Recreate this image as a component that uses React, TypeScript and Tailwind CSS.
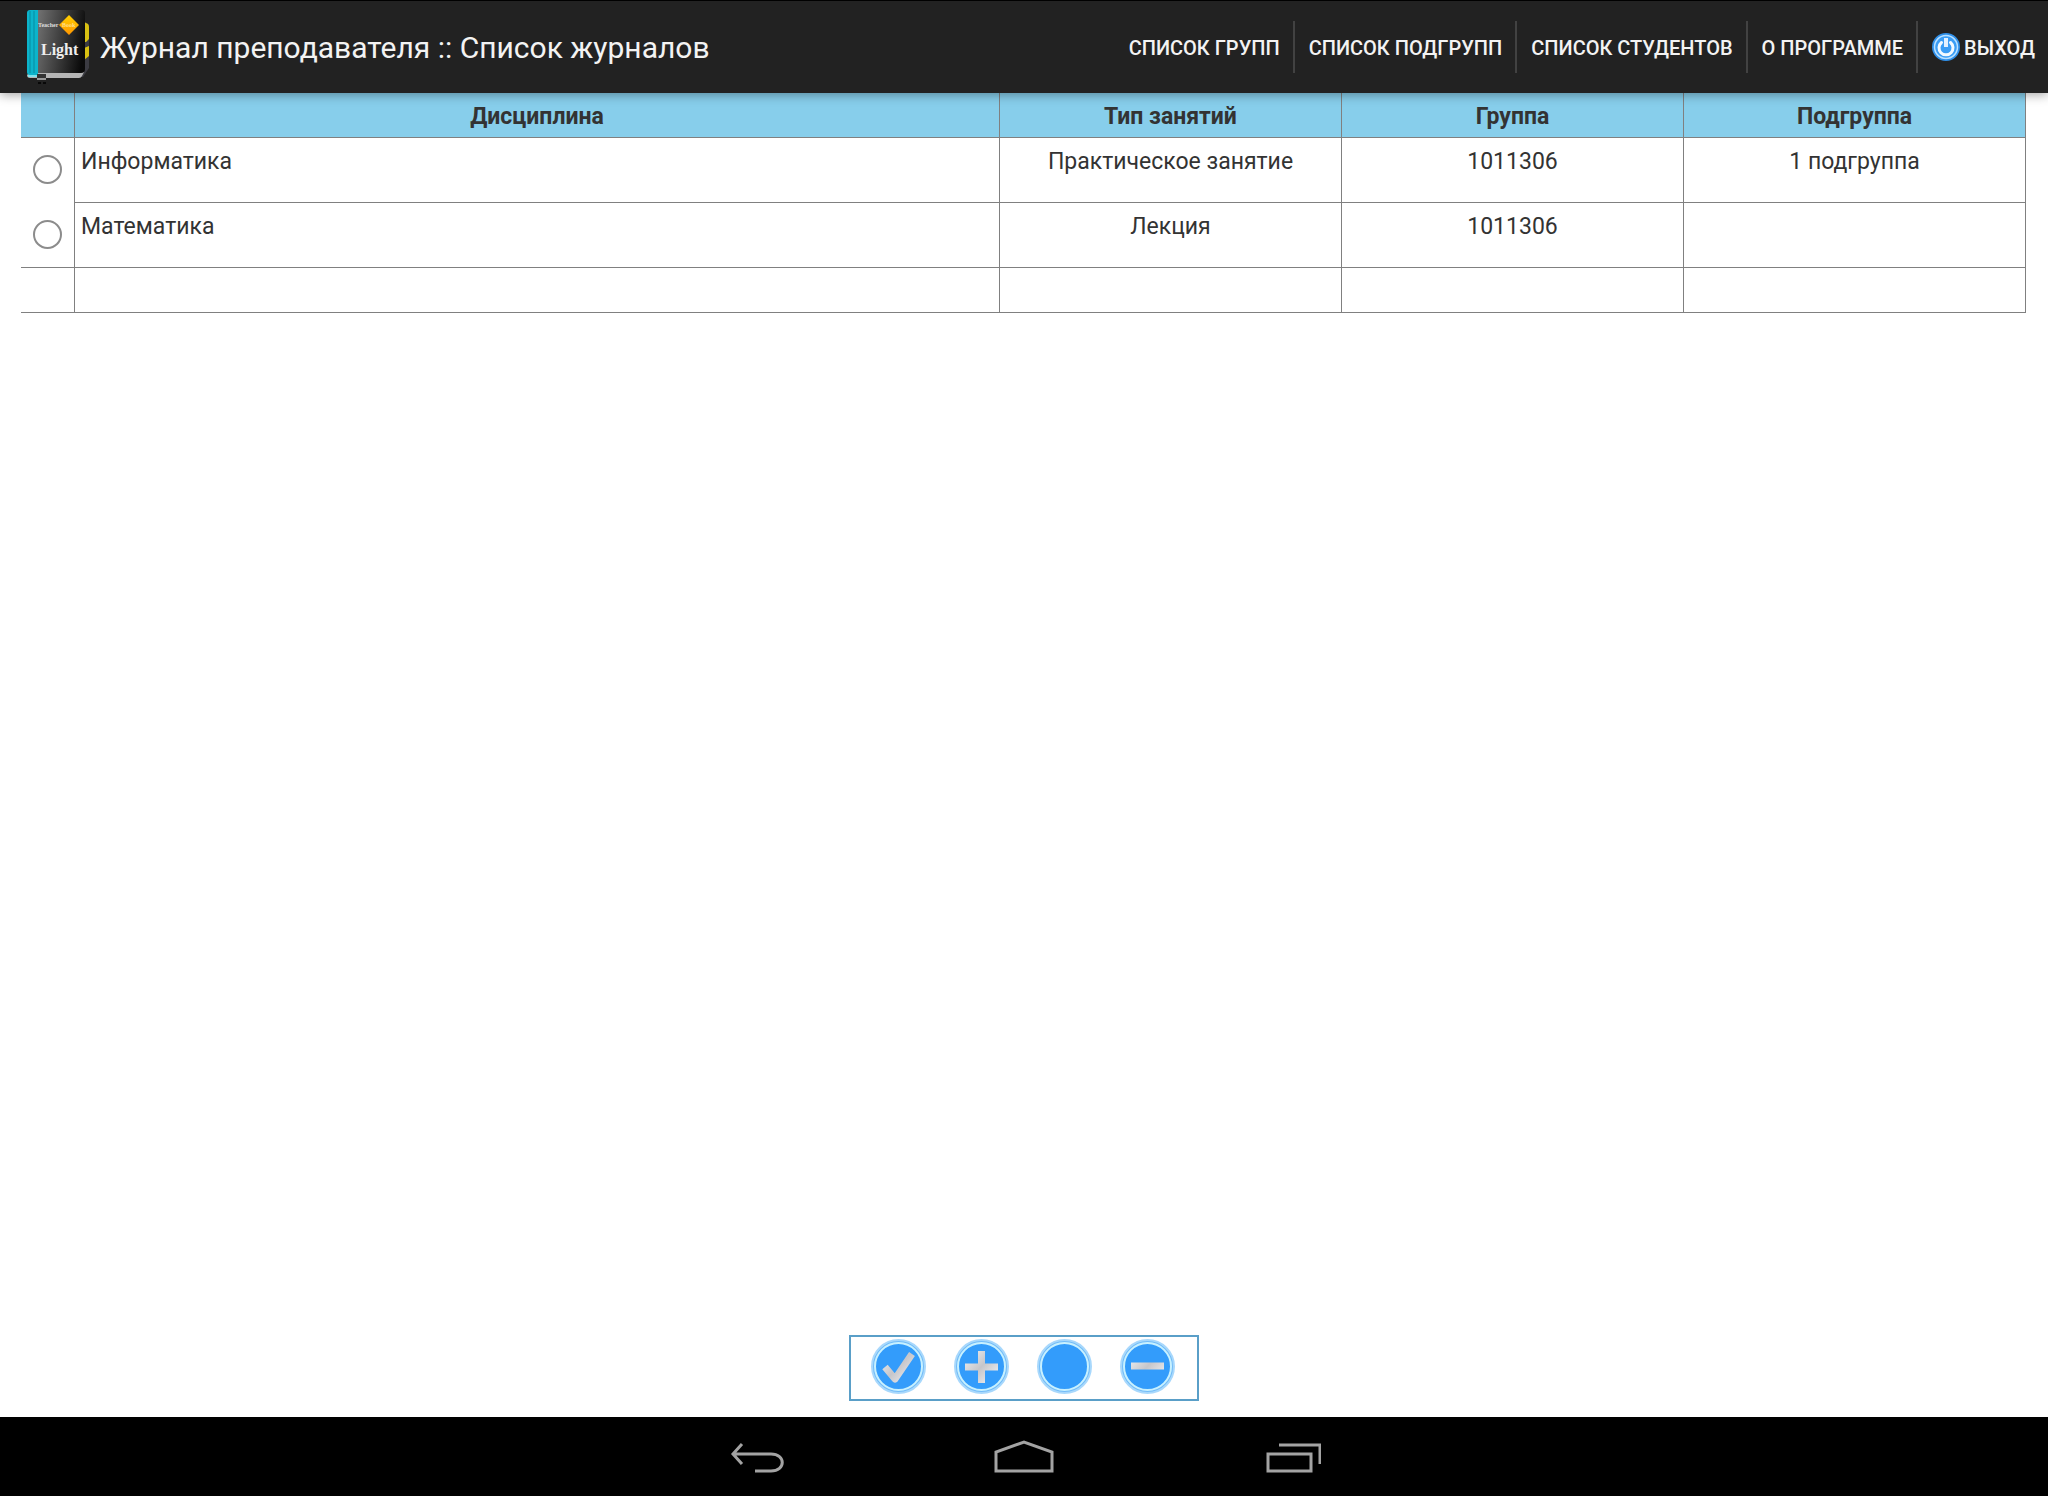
import { useState } from "react";

const menuItems = ["Список групп", "Список подгрупп", "Список студентов", "О программе"];

const journals = [
  { id: 1, subject: "Информатика", type: "Практическое занятие", group: "1011306", subgroup: "1 подгруппа" },
  { id: 2, subject: "Математика", type: "Лекция", group: "1011306", subgroup: "" },
];

const BookLogo = () => (
  <svg width="64" height="76" viewBox="0 0 64 76" aria-hidden="true">
    <defs>
      <linearGradient id="cover" x1="0" y1="0.3" x2="1" y2="0.5">
        <stop offset="0" stopColor="#707070" />
        <stop offset="0.5" stopColor="#3e3e3e" />
        <stop offset="1" stopColor="#0a0a0a" />
      </linearGradient>
      <linearGradient id="diamond" x1="0" y1="0" x2="0" y2="1">
        <stop offset="0" stopColor="#ffd000" />
        <stop offset="1" stopColor="#ff9500" />
      </linearGradient>
    </defs>
    <path d="M56 12l5 2q2 1 2 3v42l-6 9h-4z" fill="#3b3b42" />
    <path d="M58 13l4 2q1 1 1 3v12l-3 3h-2zM58 39l5-2v10l-5 4z" fill="#d8c012" />
    <path d="M4 63h54l-2 4q-1 2-3 2H4q-3 0-3-3z" fill="#b5b5b5" />
    <path d="M10 1h46q3 0 3 3v56q0 4-4 4H10z" fill="url(#cover)" />
    <path d="M4 1h8v65H4q-3 0-3-3V4q0-3 3-3z" fill="#0cb4cb" />
    <path d="M4 2v62M8 2v62" stroke="#078ba0" strokeWidth="1" />
    <path d="M2 67h9" stroke="#7fe2ec" strokeWidth="2" />
    <path d="M11 65h9v6h-9z" fill="#333" />
    <path d="M11 70h9" stroke="#999" strokeWidth="2" />
    <path d="M12 74h3M17 74h3" stroke="#080808" strokeWidth="2" />
    <path d="M43 6l10 10-10 10-10-10z" fill="url(#diamond)" />
    <text x="12" y="18" fontSize="6" fontWeight="700" fontFamily="Liberation Serif, serif" fill="#ddd">Teacher</text>
    <text x="36" y="18" fontSize="6" fontWeight="700" fontFamily="Liberation Serif, serif" fill="#ffe08a">Book</text>
    <text x="15" y="46" fontSize="16" fontWeight="700" fontFamily="Liberation Serif, serif" fill="#eee">Light</text>
  </svg>
);

const PowerIcon = () => (
  <svg width="28" height="28" viewBox="0 0 28 28" fill="none" aria-hidden="true">
    <circle cx="14" cy="14" r="13" fill="#3a9df5" stroke="#2f8fe8" strokeWidth="2" />
    <circle cx="14" cy="14" r="11.500" stroke="#b9e0ff" strokeWidth="1.500" />
    <path d="M9.500 9.500a7 7 0 1 0 9 0" stroke="#f2f9ff" strokeWidth="3" strokeLinecap="round" />
    <path d="M14 5v9" stroke="#e3f1ff" strokeWidth="4" />
  </svg>
);

const RoundIcon = ({ path }: { path?: string }) => (
  <svg width="55" height="55" viewBox="0 0 55 55" fill="none" aria-hidden="true">
    <defs>
      <linearGradient id="metal" gradientUnits="userSpaceOnUse" x1="12" y1="14" x2="42" y2="42">
        <stop offset="0" stopColor="#f0f0f2" />
        <stop offset="0.500" stopColor="#c6c6ca" />
        <stop offset="1" stopColor="#f2f2f4" />
      </linearGradient>
    </defs>
    <circle cx="27.500" cy="27.500" r="26.500" fill="#72bcf8" stroke="#a8d8fc" strokeWidth="2" />
    <circle cx="27.500" cy="27.500" r="23.500" fill="#339cfb" stroke="#c8f1ff" strokeWidth="2" />
    {path && <path d={path} stroke="url(#metal)" strokeWidth="7" strokeLinejoin="round" />}
  </svg>
);

const actions = [
  { label: "Выбрать", path: "M14 28l10 12L41 15" },
  { label: "Добавить", path: "M27.500 12v32M11 28h33" },
  { label: "Изменить" },
  { label: "Удалить", path: "M11 27h33" },
];

const systemKeys = [
  { label: "Назад", path: "M15 5L6 15l9 10M6 15h38c15 0 15 17 0 17H28" },
  { label: "Домой", path: "M2 32V13L30 3l28 10v19z" },
  { label: "Недавние", path: "M7 15h43v17H7zM18 6h41v19" },
];

const App = () => {
  const [selected, setSelected] = useState<number | null>(null);

  return (
    <div className="flex min-h-screen w-full flex-col bg-white font-[Roboto,sans-serif] text-[#333]">
      <header className="relative z-10 flex h-[93px] shrink-0 items-center border-t border-black bg-[#222] pl-[26px] text-white shadow-[0_2px_10px_rgba(0,0,0,0.35)]">
        <BookLogo />
        <h1 className="ml-[10px] pt-[2px] text-[30px] leading-10 text-[#f3f3f3]">
          Журнал преподавателя :: Список журналов
        </h1>
        <nav className="ml-auto flex items-center text-xl font-medium leading-[50px] text-[#f3f3f3]">
          {menuItems.map((item) => (
            <button key={item} className="border-r-2 border-[#424242] pl-[14px] pr-[13px] pt-[2px] uppercase">
              {item}
            </button>
          ))}
          <button className="flex items-center gap-1 pl-[14px] pr-[13px] uppercase">
            <PowerIcon />
            <span className="pt-[2px]">Выход</span>
          </button>
        </nav>
      </header>

      <main className="flex grow flex-col items-center justify-between pb-4 pl-[21px] pr-[22px]">
        <table className="w-full table-fixed border-separate border-spacing-0 text-[23px] leading-7">
          <colgroup>
            <col className="w-[54px]" />
            <col />
            <col className="w-[342px]" />
            <col className="w-[342px]" />
            <col className="w-[342px]" />
          </colgroup>
          <thead>
            <tr className="h-[45px] bg-[#87ceeb] [&>*]:border-b [&>*]:border-r [&>*]:border-[#808080] [&>*]:pt-1">
              <td></td>
              <th>Дисциплина</th>
              <th>Тип занятий</th>
              <th>Группа</th>
              <th>Подгруппа</th>
            </tr>
          </thead>
          <tbody className="text-center [&_td]:border-r [&_td]:border-[#808080]">
            {journals.map((journal, index) => (
              <tr key={journal.id} className="h-[65px] align-top [&>td+td]:border-b [&>td+td]:pt-[10px]">
                <td className={index === journals.length - 1 ? "border-b pt-[17px]" : "pt-[17px]"}>
                  <input
                    type="radio"
                    name="journal"
                    aria-label={journal.subject}
                    checked={selected === journal.id}
                    onChange={() => setSelected(journal.id)}
                    className="mx-auto block size-[29px] appearance-none rounded-full border-2 border-[#8c8c8c] checked:bg-[#339cfb]"
                  />
                </td>
                <td className="pl-[6px] text-left">{journal.subject}</td>
                <td>{journal.type}</td>
                <td>{journal.group}</td>
                <td>{journal.subgroup}</td>
              </tr>
            ))}
            <tr className="h-[45px] [&>td]:border-b">
              <td></td>
              <td></td>
              <td></td>
              <td></td>
              <td></td>
            </tr>
          </tbody>
        </table>

        <div className="flex h-[66px] items-start gap-7 border-2 border-[#5a9fc8] pl-5 pr-[22px] pt-[2px]">
          {actions.map((action) => (
            <button key={action.label} aria-label={action.label}>
              <RoundIcon path={action.path} />
            </button>
          ))}
        </div>
      </main>

      <footer className="flex h-[79px] shrink-0 items-center justify-center bg-black pb-[2px]">
        {systemKeys.map((key) => (
          <button key={key.label} aria-label={key.label} className="flex w-[267px] justify-center">
            <svg width="60" height="34" viewBox="0 0 60 34" fill="none" stroke="#a3a3a3" strokeWidth="3" aria-hidden="true">
              <path d={key.path} />
            </svg>
          </button>
        ))}
      </footer>
    </div>
  );
};

export default App;
